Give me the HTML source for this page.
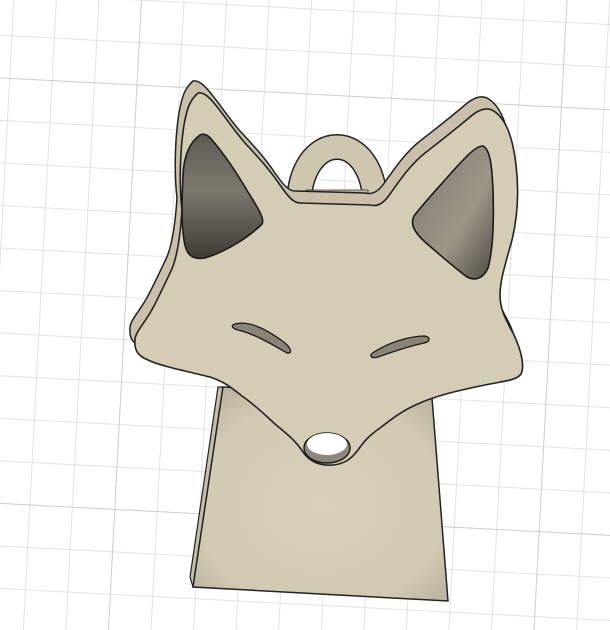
<!DOCTYPE html>
<html><head><meta charset="utf-8"><style>
html,body{margin:0;padding:0;background:#fff;width:610px;height:630px;overflow:hidden}
svg{display:block}
</style></head><body>
<svg width="610" height="630" viewBox="0 0 610 630" xmlns="http://www.w3.org/2000/svg">
<defs>
<linearGradient id="ear" x1="0" y1="0" x2="0" y2="1">
<stop offset="0" stop-color="#5f5b53"/><stop offset="0.45" stop-color="#7d786d"/><stop offset="1" stop-color="#3e3c36"/>
</linearGradient>
<linearGradient id="ear2" x1="0" y1="0" x2="1" y2="1">
<stop offset="0" stop-color="#7e796e"/><stop offset="0.6" stop-color="#9c9687"/><stop offset="1" stop-color="#4e4b44"/>
</linearGradient>
<radialGradient id="body" cx="0.5" cy="0.55" r="0.7">
<stop offset="0" stop-color="#d8d0bb"/><stop offset="0.7" stop-color="#d2c9b2"/><stop offset="1" stop-color="#b5ad9a"/>
</radialGradient>
</defs>
<g transform="rotate(3,137,85)" stroke-width="1">
<g stroke="#e3e3e3">
<line x1="-338" y1="-600" x2="-338" y2="1200"/><line x1="-295.5" y1="-600" x2="-295.5" y2="1200"/>
<line x1="-253" y1="-600" x2="-253" y2="1200"/><line x1="-210.5" y1="-600" x2="-210.5" y2="1200"/>
<line x1="-168" y1="-600" x2="-168" y2="1200"/><line x1="-125.5" y1="-600" x2="-125.5" y2="1200"/>
<line x1="-83" y1="-600" x2="-83" y2="1200"/><line x1="-40.5" y1="-600" x2="-40.5" y2="1200"/>
<line x1="9.5" y1="-600" x2="9.5" y2="1200"/>
<line x1="52" y1="-600" x2="52" y2="1200"/><line x1="94.5" y1="-600" x2="94.5" y2="1200"/>
<line x1="179.5" y1="-600" x2="179.5" y2="1200"/><line x1="222" y1="-600" x2="222" y2="1200"/>
<line x1="264.5" y1="-600" x2="264.5" y2="1200"/><line x1="307" y1="-600" x2="307" y2="1200"/>
<line x1="349.5" y1="-600" x2="349.5" y2="1200"/><line x1="392" y1="-600" x2="392" y2="1200"/>
<line x1="434.5" y1="-600" x2="434.5" y2="1200"/><line x1="477" y1="-600" x2="477" y2="1200"/>
<line x1="519.5" y1="-600" x2="519.5" y2="1200"/><line x1="604.5" y1="-600" x2="604.5" y2="1200"/>
<line x1="647" y1="-600" x2="647" y2="1200"/><line x1="689.5" y1="-600" x2="689.5" y2="1200"/>
<line x1="-600" y1="-0" x2="1200" y2="0"/><line x1="-600" y1="42.5" x2="1200" y2="42.5"/>
<line x1="-600" y1="127.5" x2="1200" y2="127.5"/><line x1="-600" y1="170" x2="1200" y2="170"/>
<line x1="-600" y1="212.5" x2="1200" y2="212.5"/><line x1="-600" y1="255" x2="1200" y2="255"/>
<line x1="-600" y1="297.5" x2="1200" y2="297.5"/><line x1="-600" y1="340" x2="1200" y2="340"/>
<line x1="-600" y1="382.5" x2="1200" y2="382.5"/><line x1="-600" y1="425" x2="1200" y2="425"/>
<line x1="-600" y1="467.5" x2="1200" y2="467.5"/><line x1="-600" y1="552.5" x2="1200" y2="552.5"/>
<line x1="-600" y1="595" x2="1200" y2="595"/><line x1="-600" y1="637.5" x2="1200" y2="637.5"/>
</g>
<g stroke="#cdcdcd">
<line x1="137" y1="-600" x2="137" y2="1200"/><line x1="562" y1="-600" x2="562" y2="1200"/>
<line x1="-600" y1="85" x2="1200" y2="85"/><line x1="-600" y1="510" x2="1200" y2="510"/>
</g>
</g>

<!-- body -->
<path d="M218,387 L223,387 L193,587 L190,577 Z" fill="#c6bda8" stroke="#222" stroke-width="1.2"/>
<path d="M223,387 L432,398 L448,601 L193,587 Z" fill="url(#body)" stroke="#222" stroke-width="1.5"/>

<!-- ring -->
<path d="M299,205 C299,170 316,147 337,147 C358,147 375,170 375,205" fill="none" stroke="#222" stroke-width="26"/>
<path d="M299,205 C299,170 316,147 337,147 C358,147 375,170 375,205" fill="none" stroke="#cfc6b0" stroke-width="23"/>
<path d="M306,190 L368,190 L368,205 L306,205Z" fill="#c2b9a4" stroke="#333" stroke-width="0.8"/>

<!-- back layer -->
<g transform="translate(-5,-12)">
<path id="fox" d="M198,93 C190,100 187,108 184,125 C180,150 179,185 182,210 C180,240 176,262 170,273 C162,290 155,305 150,313 C143,325 135,333 135,340 C134,350 138,356 148,360 C160,366 190,372 210,377 C225,382 232,388 242,396 C255,405 264,414 275,424 C287,434 295,440 303,452 C310,462 320,466 333,465 C345,464 352,458 358,450 C365,440 370,435 380,428 C393,418 403,410 420,403 C440,394 470,388 490,384 C505,381 517,380 521,374 C525,366 521,350 514,335 C506,320 500,310 500,295 C500,280 506,262 512,240 C518,215 519,190 516,165 C513,140 507,118 492,110 C485,107 478,110 470,117 C458,127 442,140 425,153 C410,165 400,180 390,194 C384,203 378,207 370,205 L300,203 C293,203 287,195 280,185 C270,170 258,157 245,143 C232,128 222,112 213,102 C208,96 203,92 198,93 Z" fill="#c9bfaa" stroke="#222" stroke-width="1.5"/>
</g>
<!-- front face -->
<path d="M198,93 C190,100 187,108 184,125 C180,150 179,185 182,210 C180,240 176,262 170,273 C162,290 155,305 150,313 C143,325 135,333 135,340 C134,350 138,356 148,360 C160,366 190,372 210,377 C225,382 232,388 242,396 C255,405 264,414 275,424 C287,434 295,440 303,452 C310,462 320,466 333,465 C345,464 352,458 358,450 C365,440 370,435 380,428 C393,418 403,410 420,403 C440,394 470,388 490,384 C505,381 517,380 521,374 C525,366 521,350 514,335 C506,320 500,310 500,295 C500,280 506,262 512,240 C518,215 519,190 516,165 C513,140 507,118 492,110 C485,107 478,110 470,117 C458,127 442,140 425,153 C410,165 400,180 390,194 C384,203 378,207 370,205 L300,203 C293,203 287,195 280,185 C270,170 258,157 245,143 C232,128 222,112 213,102 C208,96 203,92 198,93 Z" fill="#d5ccb5" stroke="#222" stroke-width="1.6"/>

<!-- ear inners -->
<path d="M200,135 C190,142 184,155 183,175 C182,200 181,220 184,240 C186,255 192,260 205,258 C225,252 248,238 262,224 C265,219 258,208 248,192 C238,175 225,155 212,140 C208,135 204,133 200,135 Z" fill="url(#ear)" stroke="#1a1a1a" stroke-width="1.6"/>
<path d="M483,146 C475,146 465,158 452,172 C438,188 422,205 414,216 C410,224 414,232 425,242 C440,255 455,268 467,277 C475,281 483,279 488,268 C493,250 494,220 493,190 C492,170 491,150 483,146 Z" fill="url(#ear2)" stroke="#1a1a1a" stroke-width="1.6"/>

<!-- eyes -->
<path d="M235,324 C250,320 268,330 285,343 C292,349 292,354 287,353 C273,345 255,334 238,330 C231,328 231,325 235,324 Z" fill="#8a8477" stroke="#1a1a1a" stroke-width="1.3"/>
<path d="M374,352 C390,342 410,336 425,336 C431,337 430,342 424,343 C410,346 392,352 378,357 C370,359 369,355 374,352 Z" fill="#8a8477" stroke="#1a1a1a" stroke-width="1.3"/>

<!-- nose hole -->
<ellipse cx="327" cy="448" rx="23" ry="15" fill="#8e887c" stroke="#1a1a1a" stroke-width="1.4"/>
<ellipse cx="327" cy="444" rx="20" ry="11" fill="#ffffff"/>
</svg>
</body></html>
